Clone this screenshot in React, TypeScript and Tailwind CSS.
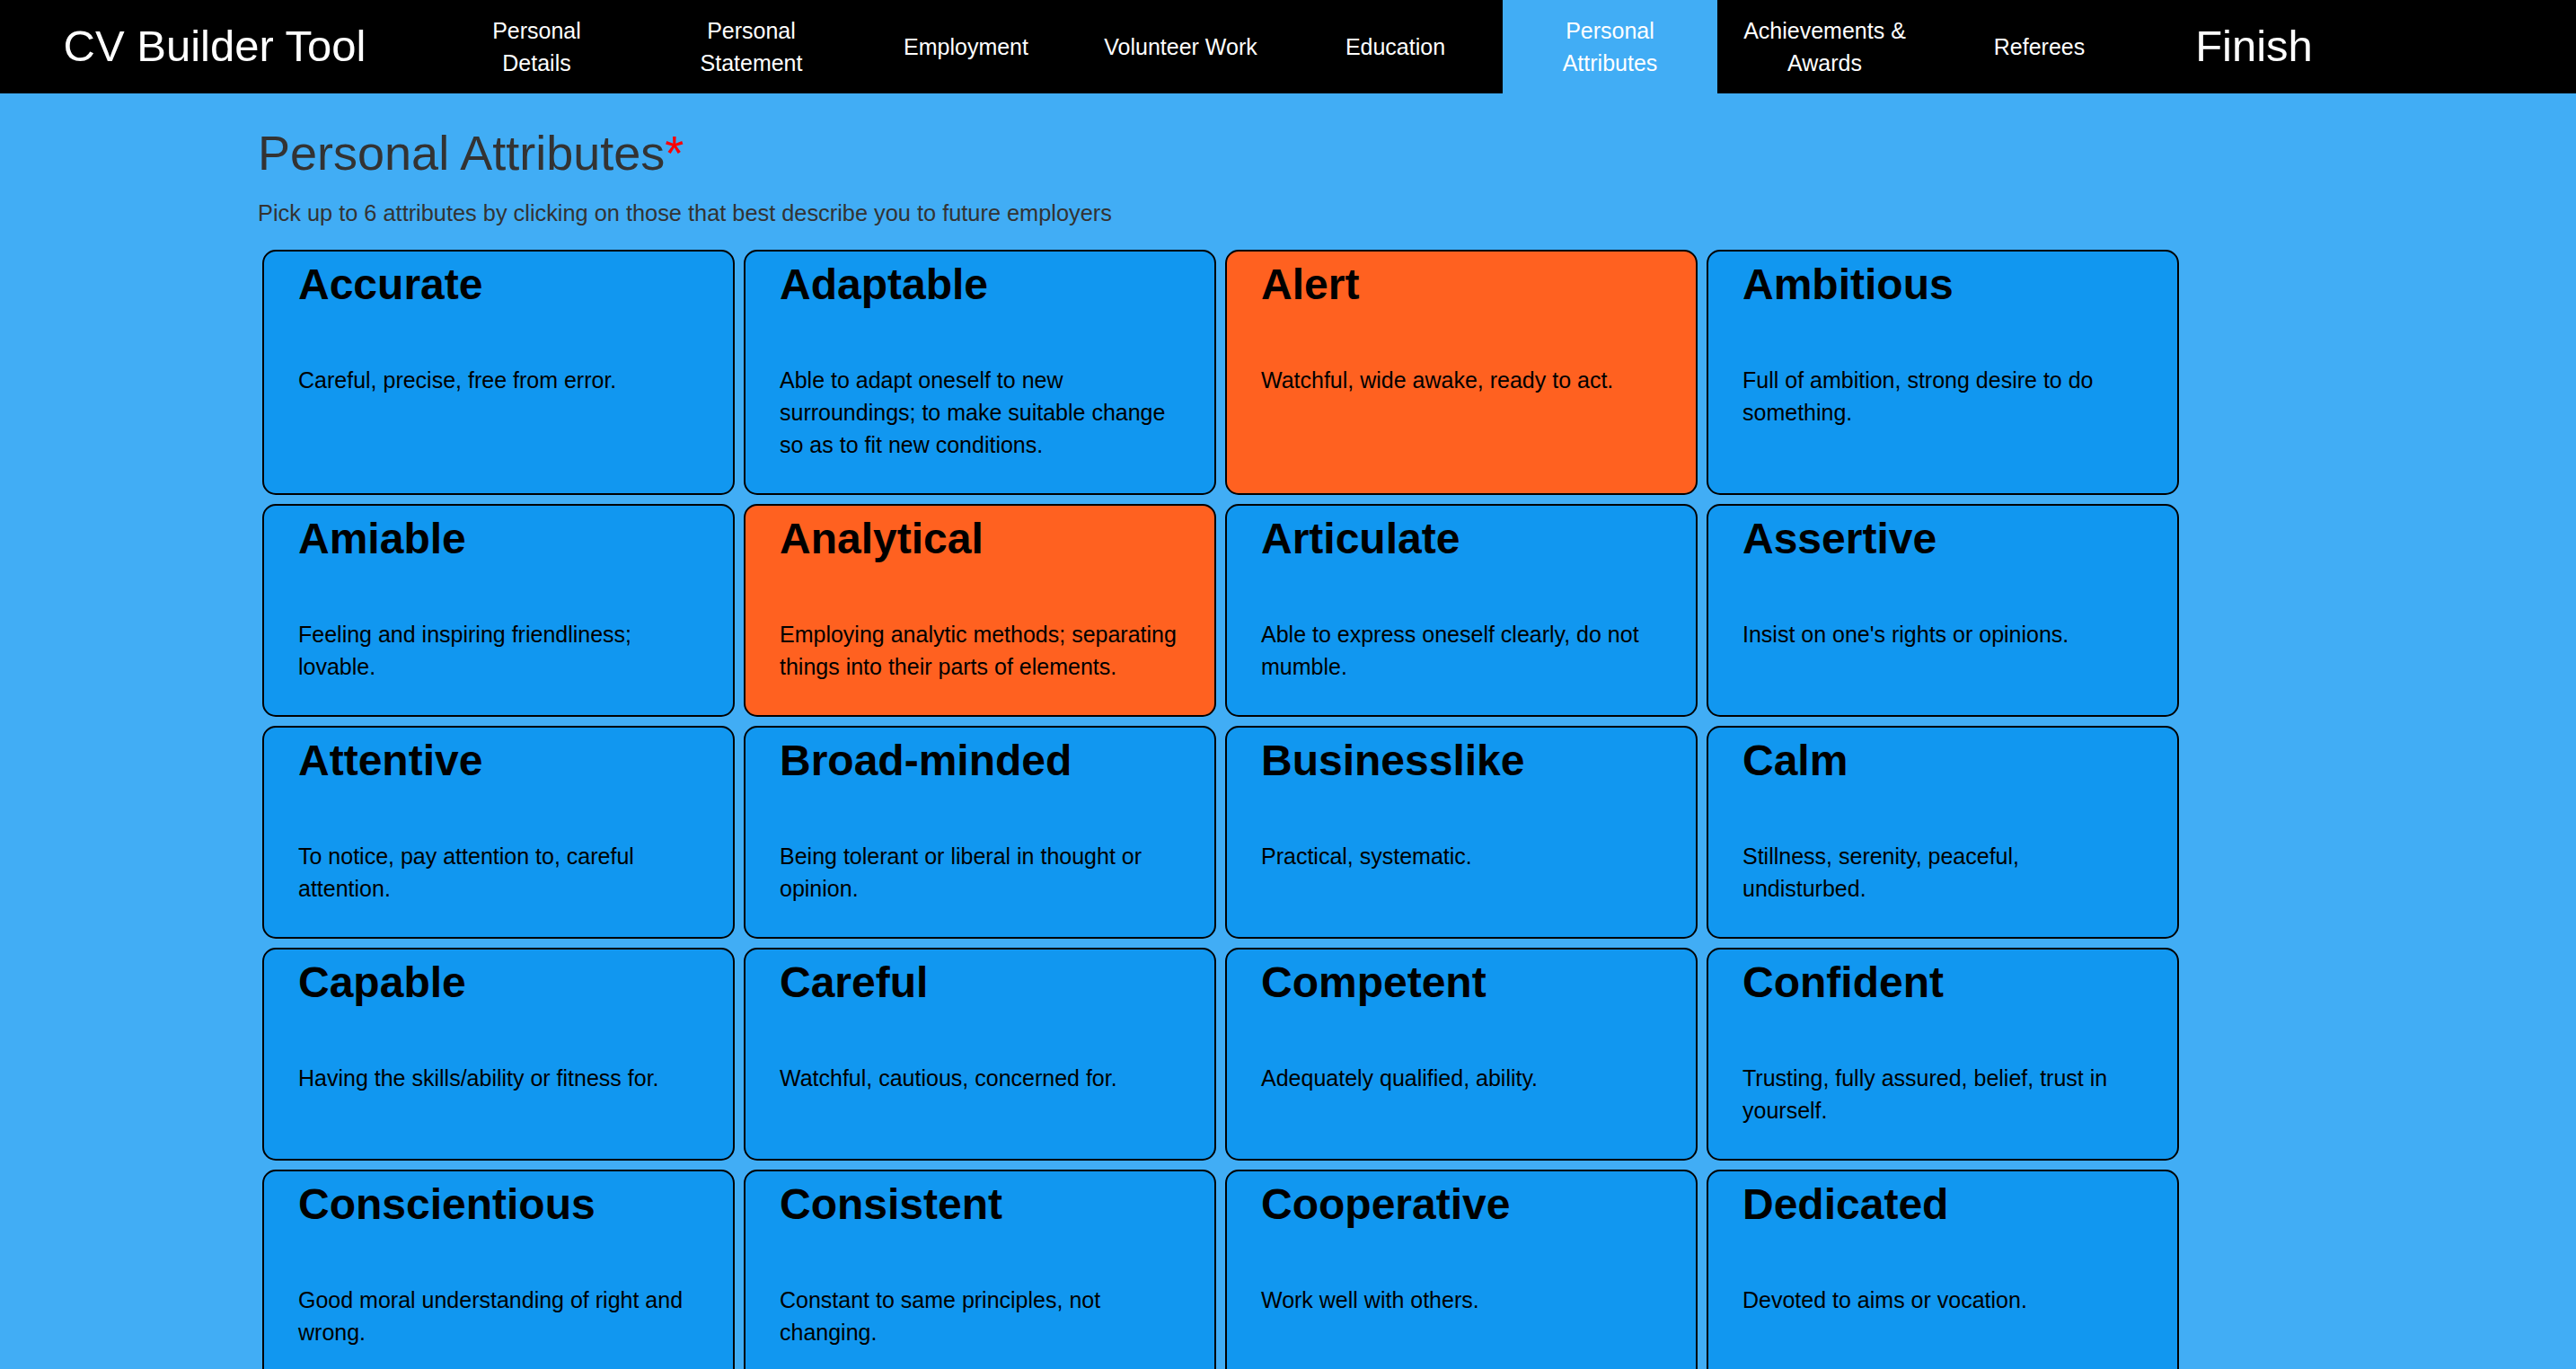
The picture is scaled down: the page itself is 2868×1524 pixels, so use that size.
import React, { useState } from "react";

// ======= DATA =======
interface Attribute {
  name: string;
  description: string;
}

const NAV_ITEMS: { label: string[]; key: string }[] = [
  { key: "details", label: ["Personal", "Details"] },
  { key: "statement", label: ["Personal", "Statement"] },
  { key: "employment", label: ["Employment"] },
  { key: "volunteer", label: ["Volunteer Work"] },
  { key: "education", label: ["Education"] },
  { key: "attributes", label: ["Personal", "Attributes"] },
  { key: "achievements", label: ["Achievements &", "Awards"] },
  { key: "referees", label: ["Referees"] },
];

const ATTRIBUTES: Attribute[] = [
  { name: "Accurate", description: "Careful, precise, free from error." },
  {
    name: "Adaptable",
    description:
      "Able to adapt oneself to new surroundings; to make suitable change so as to fit new conditions.",
  },
  { name: "Alert", description: "Watchful, wide awake, ready to act." },
  { name: "Ambitious", description: "Full of ambition, strong desire to do something." },
  { name: "Amiable", description: "Feeling and inspiring friendliness; lovable." },
  {
    name: "Analytical",
    description: "Employing analytic methods; separating things into their parts of elements.",
  },
  { name: "Articulate", description: "Able to express oneself clearly, do not mumble." },
  { name: "Assertive", description: "Insist on one's rights or opinions." },
  { name: "Attentive", description: "To notice, pay attention to, careful attention." },
  { name: "Broad-minded", description: "Being tolerant or liberal in thought or opinion." },
  { name: "Businesslike", description: "Practical, systematic." },
  { name: "Calm", description: "Stillness, serenity, peaceful, undisturbed." },
  { name: "Capable", description: "Having the skills/ability or fitness for." },
  { name: "Careful", description: "Watchful, cautious, concerned for." },
  { name: "Competent", description: "Adequately qualified, ability." },
  { name: "Confident", description: "Trusting, fully assured, belief, trust in yourself." },
  { name: "Conscientious", description: "Good moral understanding of right and wrong." },
  { name: "Consistent", description: "Constant to same principles, not changing." },
  { name: "Cooperative", description: "Work well with others." },
  { name: "Dedicated", description: "Devoted to aims or vocation." },
  { name: "Dependable", description: "Reliable, trustworthy." },
  { name: "Determined", description: "Firm in purpose, resolute." },
];

const MAX_PICKS = 6;

const App: React.FC = () => {
  const [selected, setSelected] = useState<string[]>(["Alert", "Analytical"]);

  // chọn / bỏ chọn thuộc tính
  const toggle = (name: string) => {
    setSelected((prev) => {
      if (prev.includes(name)) return prev.filter((n) => n !== name);
      if (prev.length >= MAX_PICKS) return prev;
      return [...prev, name];
    });
  };

  return (
    <div className="min-h-screen bg-[#41adf5] font-['Liberation_Sans',Arial,sans-serif]">
      {/* Top nav */}
      <nav className="grid grid-cols-12 h-[104px] bg-black text-white">
        <div className="col-span-2 flex items-center justify-center text-[49px]">
          CV Builder Tool
        </div>
        {NAV_ITEMS.map((item) => (
          <div
            key={item.key}
            className={`flex flex-col items-center justify-center text-[25px] leading-[36px] text-center cursor-pointer ${
              item.key === "attributes" ? "bg-[#41adf5]" : ""
            }`}
          >
            {item.label.map((line) => (
              <span key={line}>{line}</span>
            ))}
          </div>
        ))}
        <div className="flex items-center justify-center text-[49px] cursor-pointer">Finish</div>
        <div />
      </nav>

      <main className="pl-[287px] pt-[35px]">
        <h1 className="text-[54px] leading-[62px] text-[#333333]">
          Personal Attributes<span className="text-[#ff0000]">*</span>
        </h1>
        <p className="mt-[18px] text-[25.35px] leading-[36px] text-[#333333]">
          Pick up to {MAX_PICKS} attributes by clicking on those that best describe you to future employers
        </p>

        <div className="ml-[5px] mt-[23px] grid grid-cols-[repeat(4,526px)] gap-x-[10px] gap-y-[10px] pb-10">
          {ATTRIBUTES.map((attr) => {
            const isSelected = selected.includes(attr.name);
            return (
              <div
                key={attr.name}
                onClick={() => toggle(attr.name)}
                className={`flex flex-col cursor-pointer border-2 border-black rounded-[15px] px-[38px] pt-[9px] pb-[36px] text-black ${
                  isSelected ? "bg-[#ff6120]" : "bg-[#1197f0]"
                }`}
              >
                <div className="text-[48px] leading-[55px] font-bold">{attr.name}</div>
                <div className="mt-[61px] text-[25px] leading-[36px]">{attr.description}</div>
              </div>
            );
          })}
        </div>
      </main>
    </div>
  );
};

export default App;
